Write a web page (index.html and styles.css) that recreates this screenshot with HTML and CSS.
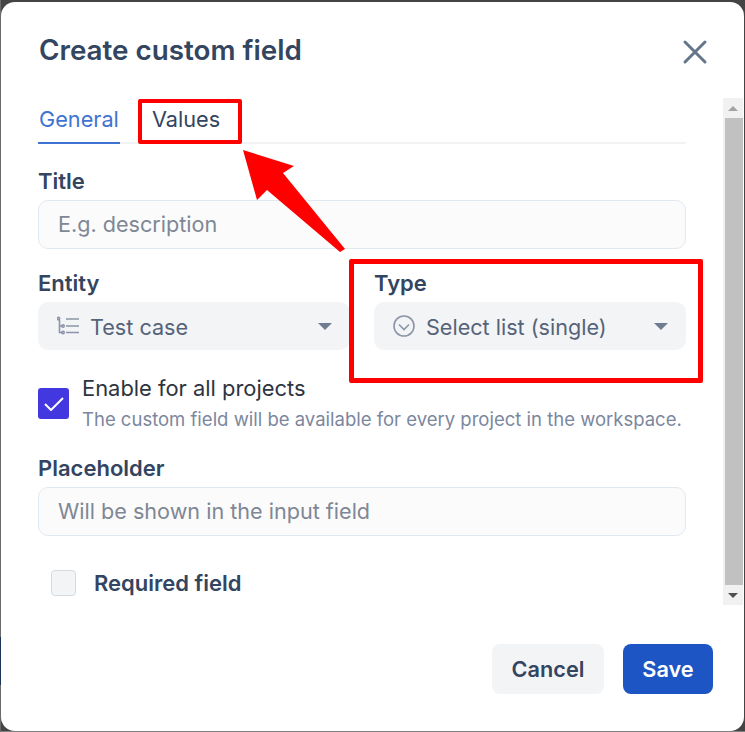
FILE: index.html
```html
<!DOCTYPE html>
<html lang="en">
<head>
    <meta charset="UTF-8">
    <title>Create custom field</title>
    <link rel="stylesheet" href="styles.css">
</head>
<body>

    <div class="modal">
        <div class="modal-header">
            <h2>Create custom field</h2>
            <svg class="close-icon" width="26" height="26" viewBox="0 0 26 26">
                <path d="M3 3L23 23M23 3L3 23" />
            </svg>
        </div>

        <div class="modal-scroll">
            <div class="modal-body">
                <div class="tabs">
                    <div class="tab active">General</div>
                    <div class="tab">Values</div>
                </div>

                <label class="field-label first">Title</label>
                <div class="text-input">E.g. description</div>

                <div class="select-row">
                    <div>
                        <label class="field-label">Entity</label>
                        <div class="select-box">
                            <svg class="select-icon" width="22" height="20" viewBox="0 0 22 20">
                                <circle cx="1.5" cy="2.5" r="1.2" />
                                <circle cx="6" cy="10" r="1.2" />
                                <circle cx="6" cy="16.5" r="1.2" />
                                <path d="M2.5 4V16.5H5M2.5 10H5M9 3H22M9 10H22M9 16.5H22" />
                            </svg>
                            <span class="select-text">Test case</span>
                            <span class="caret"></span>
                        </div>
                    </div>
                    <div>
                        <label class="field-label">Type</label>
                        <div class="select-box">
                            <svg class="select-icon" width="22" height="22" viewBox="0 0 22 22">
                                <circle cx="11" cy="11" r="10" />
                                <path d="M6 9.5L11 14.5L16 9.5" />
                            </svg>
                            <span class="select-text">Select list (single)</span>
                            <span class="caret"></span>
                        </div>
                    </div>
                </div>

                <div class="enable-row">
                    <div class="checkbox checked">
                        <svg width="20" height="14" viewBox="0 0 20 14">
                            <path d="M1 7L7 13L19 1" />
                        </svg>
                    </div>
                    <div>
                        <div class="enable-title">Enable for all projects</div>
                        <div class="enable-hint">The custom field will be available for every project in the workspace.</div>
                    </div>
                </div>

                <label class="field-label">Placeholder</label>
                <div class="text-input">Will be shown in the input field</div>

                <div class="required-row">
                    <div class="checkbox small"></div>
                    <span>Required field</span>
                </div>
            </div>

            <div class="scrollbar">
                <div class="scroll-btn"><span class="arrow-up"></span></div>
                <div class="scroll-thumb"></div>
                <div class="scroll-btn"><span class="arrow-down"></span></div>
            </div>
        </div>

        <div class="modal-footer">
            <button class="btn btn-cancel">Cancel</button>
            <button class="btn btn-save">Save</button>
        </div>
    </div>

    <!-- annotations drawn on top of the screenshot -->
    <div class="mark mark-values"></div>
    <div class="mark mark-type"></div>
    <svg class="mark-arrow" width="745" height="732" viewBox="0 0 745 732">
        <path d="M243 150L294 166L283 173L345 249L340 252L267 190L257 200Z" />
    </svg>

</body>
</html>
```

FILE: styles.css
```css
* {
    box-sizing: border-box;
}
html, body {
    margin: 0;
    height: 732px;
    overflow: hidden;
}
body {
    font-family: Inter, "Liberation Sans", sans-serif;
    background:
        linear-gradient(#1f3358, #1f3358) 0 637px / 1px 48px no-repeat,
        linear-gradient(#6a6a6a, #6a6a6a) 0 0 / 1px 100% no-repeat,
        linear-gradient(#808080, #808080) 0 731px / 100% 1px no-repeat,
        #444;
    padding: 2px 1px 1px 1px;
    position: relative;
}
.modal {
    height: 729px;
    background: #fff;
    border-radius: 14px;
    display: flex;
    flex-direction: column;
}
.modal-header {
    display: flex;
    justify-content: space-between;
    align-items: center;
    height: 96px;
    padding: 0 36px 0 38px;
}
.modal-header h2 {
    margin: 0;
    font-size: 27.8px;
    font-weight: 600;
    color: #334560;
}
.close-icon {
    margin-top: 4px;
}
.close-icon path {
    fill: none;
    stroke: #64748b;
    stroke-width: 3;
    stroke-linecap: round;
}
.modal-scroll {
    display: flex;
    height: 507px;
}
.modal-body {
    width: 722px;
    padding: 0 37px;
}
.tabs {
    display: flex;
    gap: 31px;
    height: 46px;
    border-bottom: 2px solid #f1f3f5;
    font-size: 21.7px;
}
.tab {
    color: #334560;
    padding: 8px 1px 0 1px;
    height: 46px;
}
.tab.active {
    color: #3f73d3;
    border-bottom: 2px solid #3f73d3;
}
.field-label {
    display: block;
    font-size: 22px;
    font-weight: 600;
    line-height: 24px;
    color: #334560;
    margin: 0 0 7px 0;
}
.field-label.first {
    margin-top: 25px;
}
.text-input {
    height: 49px;
    border: 1.5px solid #e2e8f0;
    border-radius: 10px;
    background: #fbfbfc;
    color: #7f8794;
    font-size: 21.6px;
    line-height: 46px;
    padding-left: 19px;
}
.select-row {
    display: grid;
    grid-template-columns: 312px 312px;
    gap: 24px;
    margin-top: 22px;
}
.select-box {
    display: flex;
    align-items: center;
    height: 48px;
    border-radius: 10px;
    background: #f3f4f6;
    padding: 0 19px;
    color: #55637a;
    font-size: 21.6px;
}
.select-icon {
    margin-right: 11px;
    flex: none;
}
.select-icon circle, .select-icon path {
    fill: none;
    stroke: #8b95a7;
    stroke-width: 1.6;
}
.select-text {
    flex: 1;
    padding-top: 2px;
}
.caret {
    width: 0;
    height: 0;
    margin-right: -1px;
    border-left: 7px solid transparent;
    border-right: 7px solid transparent;
    border-top: 7px solid #6f7c92;
}
.enable-row {
    display: flex;
    gap: 13px;
    margin-top: 24px;
    margin-bottom: 25px;
}
.checkbox {
    flex: none;
    border-radius: 3px;
}
.checkbox.checked {
    width: 31px;
    height: 31px;
    margin-top: 14px;
    background: #4338e0;
    display: flex;
    align-items: center;
    justify-content: center;
}
.checkbox.checked path {
    fill: none;
    stroke: #fff;
    stroke-width: 2;
}
.checkbox.small {
    width: 25px;
    height: 26px;
    background: #f3f4f6;
    border: 1.5px solid #d5dbe3;
    border-radius: 4px;
}
.enable-title {
    font-size: 21.9px;
    line-height: 28px;
    color: #2d3440;
}
.enable-hint {
    font-size: 18.5px;
    line-height: 24px;
    margin-top: 5px;
    color: #7b879e;
}
.required-row {
    display: flex;
    align-items: center;
    gap: 18px;
    margin: 34px 0 0 13px;
    font-size: 22px;
    font-weight: 600;
    color: #334560;
}
.scrollbar {
    width: 20px;
    background: #f1f1f1;
    display: flex;
    flex-direction: column;
}
.scroll-btn {
    height: 20px;
    display: flex;
    align-items: center;
    justify-content: center;
}
.scroll-thumb {
    flex: 1;
    margin-left: 2px;
    background: #c1c1c1;
}
.arrow-up, .arrow-down {
    width: 0;
    height: 0;
    border-left: 5px solid transparent;
    border-right: 5px solid transparent;
}
.arrow-up {
    border-bottom: 5px solid #a3a3a3;
}
.arrow-down {
    border-top: 5px solid #505050;
}
.modal-footer {
    display: flex;
    justify-content: flex-end;
    gap: 19px;
    padding: 39px 31px 0 0;
}
.btn {
    height: 50px;
    border: none;
    border-radius: 8px;
    font-family: inherit;
    font-size: 21.7px;
    font-weight: 600;
}
.btn-cancel {
    width: 112px;
    background: #f3f4f6;
    color: #334560;
}
.btn-save {
    width: 90px;
    background: #1e55c4;
    color: #fff;
}
.mark {
    position: absolute;
    border: 5px solid #f00;
    border-radius: 2px;
}
.mark-values {
    left: 138px;
    top: 99px;
    width: 104px;
    height: 45px;
    border-width: 4px;
}
.mark-type {
    left: 349px;
    top: 259px;
    width: 354px;
    height: 124px;
}
.mark-arrow {
    position: absolute;
    left: 0;
    top: 0;
}
.mark-arrow path {
    fill: #f00;
}
```
